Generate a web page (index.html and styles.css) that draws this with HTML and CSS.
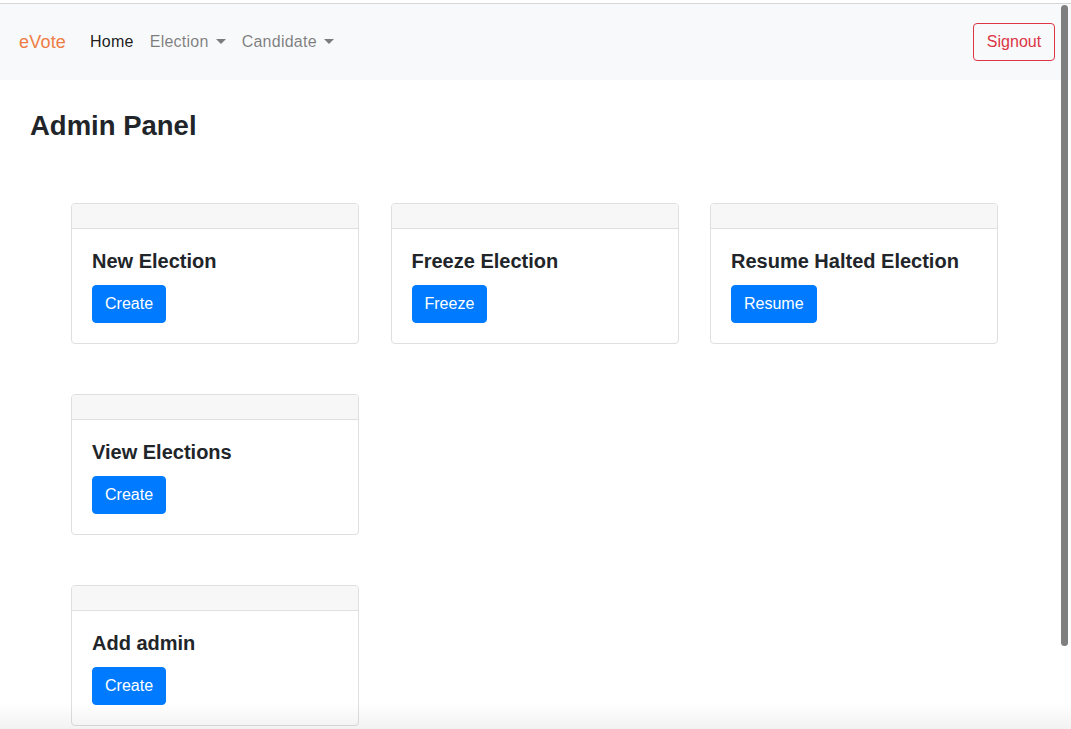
FILE: index.html
```html
<!DOCTYPE html>
<html lang="en">
<head>
<meta charset="utf-8">
<title>eVote - Admin Panel</title>
<link rel="stylesheet" href="styles.css">
</head>
<body>
<div class="topline"></div>
<nav class="navbar">
  <a class="brand" href="#">eVote</a>
  <ul class="nav">
    <li><a class="nav-link active" href="#">Home</a></li>
    <li><a class="nav-link dropdown" href="#">Election</a></li>
    <li><a class="nav-link dropdown" href="#">Candidate</a></li>
  </ul>
  <button class="btn-signout">Signout</button>
</nav>
<main class="content">
  <h1 class="page-title">Admin Panel</h1>
  <div class="card-grid">
    <div class="card">
      <div class="card-header"></div>
      <div class="card-body">
        <h5 class="card-title">New Election</h5>
        <button class="btn-primary">Create</button>
      </div>
    </div>
    <div class="card">
      <div class="card-header"></div>
      <div class="card-body">
        <h5 class="card-title">Freeze Election</h5>
        <button class="btn-primary">Freeze</button>
      </div>
    </div>
    <div class="card">
      <div class="card-header"></div>
      <div class="card-body">
        <h5 class="card-title">Resume Halted Election</h5>
        <button class="btn-primary">Resume</button>
      </div>
    </div>
    <div class="card row-start">
      <div class="card-header"></div>
      <div class="card-body">
        <h5 class="card-title">View Elections</h5>
        <button class="btn-primary">Create</button>
      </div>
    </div>
    <div class="card row-start">
      <div class="card-header"></div>
      <div class="card-body">
        <h5 class="card-title">Add admin</h5>
        <button class="btn-primary">Create</button>
      </div>
    </div>
  </div>
</main>
<div class="scrollbar"></div>
<div class="bottom-shade"></div>
</body>
</html>
```
FILE: styles.css
```css
* { box-sizing: border-box; }
html, body {
  margin: 0;
  padding: 0;
  height: 100%;
  overflow: hidden;
}
body {
  font-family: "Liberation Sans", Arial, sans-serif;
  font-size: 16px;
  line-height: 1.5;
  color: #212529;
  background: #fff;
}
.topline {
  height: 4px;
  border-bottom: 1px solid #d6d6d6;
  background: #fff;
}
.navbar {
  display: flex;
  align-items: center;
  height: 76px;
  padding: 0 16px 0 19px;
  background: #f8f9fa;
}
.brand {
  color: #ee7d45;
  font-size: 18px;
  letter-spacing: 0.2px;
  text-decoration: none;
  margin-right: 16px;
}
.nav {
  display: flex;
  list-style: none;
  margin: 0;
  padding: 0;
  flex: 1;
}
.nav-link {
  display: flex;
  align-items: center;
  padding: 8px;
  color: rgba(0,0,0,.5);
  text-decoration: none;
  letter-spacing: 0.25px;
}
.nav-link.active { color: rgba(0,0,0,.9); }
.nav-link.dropdown::after {
  content: "";
  display: inline-block;
  margin-left: 7px;
  border-top: 5px solid;
  border-left: 5px solid transparent;
  border-right: 5px solid transparent;
  margin-top: -2px;
}
.btn-signout {
  font: inherit;
  font-size: 16px;
  line-height: 24px;
  padding: 6px 12px;
  color: #dc3545;
  background: transparent;
  border: 1px solid #dc3545;
  border-radius: 4px;
  width: 82px;
}
.content {
  padding: 29px 30px 0;
}
.page-title {
  margin: 0;
  font-size: 27.5px;
  line-height: 34px;
  font-weight: bold;
}
.card-grid {
  display: grid;
  grid-template-columns: repeat(3, 288px);
  column-gap: 31.5px;
  row-gap: 50px;
  margin: 60px 0 0 41px;
}
.row-start { grid-column: 1; }
.card {
  border: 1px solid #dfdfdf;
  border-radius: 4px;
  height: 141px;
  overflow: hidden;
  background: #fff;
}
.card-header {
  height: 25px;
  background: #f7f7f7;
  border-bottom: 1px solid #dfdfdf;
}
.card-body {
  padding: 20px 20px 20px;
}
.card-title {
  margin: 0 0 12px;
  font-size: 20px;
  line-height: 24px;
  font-weight: bold;
}
.btn-primary {
  font: inherit;
  font-size: 16px;
  line-height: 24px;
  padding: 6px 12px;
  color: #fff;
  background: #007bff;
  border: 1px solid #007bff;
  border-radius: 4px;
}
.scrollbar {
  position: fixed;
  top: 5px;
  left: 1061px;
  width: 7px;
  height: 641px;
  background: #7f7f7f;
  border-radius: 4px;
}
.bottom-shade {
  position: fixed;
  left: 0;
  right: 0;
  bottom: 0;
  height: 26px;
  background: linear-gradient(to bottom, rgba(0,0,0,0), rgba(0,0,0,.05));
  pointer-events: none;
}
```
